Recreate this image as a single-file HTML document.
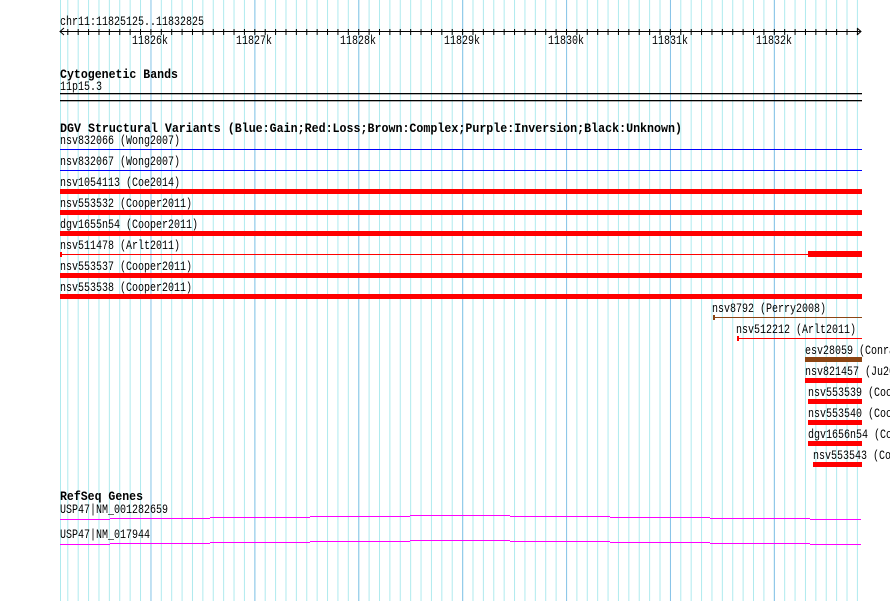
<!DOCTYPE html>
<html><head><meta charset="utf-8"><style>
html,body{margin:0;padding:0;background:#fff;}
svg{display:block;}
text{font-family:"Liberation Mono","DejaVu Sans Mono",monospace;font-size:12.5px;fill:#000;}
.b{font-weight:bold;font-size:13px;}
</style></head><body>
<svg width="890" height="601" viewBox="0 0 890 601" xmlns="http://www.w3.org/2000/svg">
<defs>
<pattern id="g" x="67.3" y="0" width="10.3896" height="601" patternUnits="userSpaceOnUse">
<rect x="0" y="0" width="1" height="601" fill="#aeeaee"/>
</pattern>
<pattern id="t" x="67.3" y="0" width="10.3896" height="601" patternUnits="userSpaceOnUse">
<rect x="0" y="29" width="1" height="6" fill="#000"/>
</pattern>
</defs>
<rect width="890" height="601" fill="#fff"/>
<rect x="60" y="0" width="802" height="601" fill="url(#g)"/>
<rect x="60" y="0" width="1" height="601" fill="#aeeaee"/>
<g fill="#8ac4e8">
<rect x="150.5" y="0" width="1" height="601"/>
<rect x="254.4" y="0" width="1" height="601"/>
<rect x="358.3" y="0" width="1" height="601"/>
<rect x="462.2" y="0" width="1" height="601"/>
<rect x="566.1" y="0" width="1" height="601"/>
<rect x="670" y="0" width="1" height="601"/>
<rect x="773.9" y="0" width="1" height="601"/>
</g>

<text x="60" y="25" textLength="144" lengthAdjust="spacingAndGlyphs">chr11:11825125..11832825</text>
<rect x="60" y="0" width="800" height="601" fill="url(#t)"/>
<rect x="60" y="31" width="801" height="1" fill="#000"/>
<path d="M64 28 L60 31.5 L64 35 M857 28 L861 31.5 L857 35" stroke="#000" fill="none" stroke-width="1"/>
<g>
<text x="132" y="44" textLength="36" lengthAdjust="spacingAndGlyphs">11826k</text>
<text x="236" y="44" textLength="36" lengthAdjust="spacingAndGlyphs">11827k</text>
<text x="340" y="44" textLength="36" lengthAdjust="spacingAndGlyphs">11828k</text>
<text x="444" y="44" textLength="36" lengthAdjust="spacingAndGlyphs">11829k</text>
<text x="548" y="44" textLength="36" lengthAdjust="spacingAndGlyphs">11830k</text>
<text x="652" y="44" textLength="36" lengthAdjust="spacingAndGlyphs">11831k</text>
<text x="756" y="44" textLength="36" lengthAdjust="spacingAndGlyphs">11832k</text>
</g>

<text class="b" x="60" y="78" textLength="118" lengthAdjust="spacingAndGlyphs">Cytogenetic Bands</text>
<text x="60" y="90" textLength="42" lengthAdjust="spacingAndGlyphs">11p15.3</text>
<rect x="60" y="93" width="802" height="1.3" fill="#000"/>
<rect x="60" y="100" width="802" height="1.3" fill="#000"/>

<text class="b" x="60" y="132" textLength="622" lengthAdjust="spacingAndGlyphs">DGV Structural Variants (Blue:Gain;Red:Loss;Brown:Complex;Purple:Inversion;Black:Unknown)</text>

<text x="60" y="144" textLength="120" lengthAdjust="spacingAndGlyphs">nsv832066 (Wong2007)</text>
<rect x="60" y="149" width="802" height="1" fill="#0000ff"/>
<text x="60" y="165" textLength="120" lengthAdjust="spacingAndGlyphs">nsv832067 (Wong2007)</text>
<rect x="60" y="170" width="802" height="1" fill="#0000ff"/>
<text x="60" y="186" textLength="120" lengthAdjust="spacingAndGlyphs">nsv1054113 (Coe2014)</text>
<rect x="60" y="189" width="802" height="5" fill="#ff0000"/>
<text x="60" y="207" textLength="132" lengthAdjust="spacingAndGlyphs">nsv553532 (Cooper2011)</text>
<rect x="60" y="210" width="802" height="5" fill="#ff0000"/>
<text x="60" y="228" textLength="138" lengthAdjust="spacingAndGlyphs">dgv1655n54 (Cooper2011)</text>
<rect x="60" y="231" width="802" height="5" fill="#ff0000"/>
<text x="60" y="249" textLength="120" lengthAdjust="spacingAndGlyphs">nsv511478 (Arlt2011)</text>
<rect x="60" y="254" width="802" height="1" fill="#ff0000"/>
<rect x="60" y="252" width="2" height="5" fill="#ff0000"/>
<rect x="808" y="251" width="54" height="6" fill="#ff0000"/>
<text x="60" y="270" textLength="132" lengthAdjust="spacingAndGlyphs">nsv553537 (Cooper2011)</text>
<rect x="60" y="273" width="802" height="5" fill="#ff0000"/>
<text x="60" y="291" textLength="132" lengthAdjust="spacingAndGlyphs">nsv553538 (Cooper2011)</text>
<rect x="60" y="294" width="802" height="5" fill="#ff0000"/>

<text x="712" y="312" textLength="114" lengthAdjust="spacingAndGlyphs">nsv8792 (Perry2008)</text>
<rect x="713" y="317" width="149" height="1" fill="#8b4513"/>
<rect x="713" y="315" width="2" height="5" fill="#8b4513"/>
<text x="736" y="333" textLength="120" lengthAdjust="spacingAndGlyphs">nsv512212 (Arlt2011)</text>
<rect x="737" y="338" width="125" height="1" fill="#ff0000"/>
<rect x="737" y="336" width="2" height="5" fill="#ff0000"/>
<text x="805" y="354" textLength="126" lengthAdjust="spacingAndGlyphs">esv28059 (Conrad2010)</text>
<rect x="805" y="357" width="57" height="5" fill="#8b4513"/>
<text x="805" y="375" textLength="108" lengthAdjust="spacingAndGlyphs">nsv821457 (Ju2010)</text>
<rect x="805" y="378" width="57" height="5" fill="#ff0000"/>
<text x="808" y="396" textLength="132" lengthAdjust="spacingAndGlyphs">nsv553539 (Cooper2011)</text>
<rect x="808" y="399" width="54" height="5" fill="#ff0000"/>
<text x="808" y="417" textLength="132" lengthAdjust="spacingAndGlyphs">nsv553540 (Cooper2011)</text>
<rect x="808" y="420" width="54" height="5" fill="#ff0000"/>
<text x="808" y="438" textLength="138" lengthAdjust="spacingAndGlyphs">dgv1656n54 (Cooper2011)</text>
<rect x="808" y="441" width="54" height="5" fill="#ff0000"/>
<text x="813" y="459" textLength="132" lengthAdjust="spacingAndGlyphs">nsv553543 (Cooper2011)</text>
<rect x="813" y="462" width="49" height="5" fill="#ff0000"/>

<text class="b" x="60" y="500" textLength="83" lengthAdjust="spacingAndGlyphs">RefSeq Genes</text>
<text x="60" y="513" textLength="108" lengthAdjust="spacingAndGlyphs">USP47|NM_001282659</text>
<g fill="#ff00ff">
<rect x="60" y="519" width="50" height="1"/><rect x="110" y="518" width="100" height="1"/><rect x="210" y="517" width="100" height="1"/><rect x="310" y="516" width="100" height="1"/><rect x="410" y="515" width="100" height="1"/><rect x="510" y="516" width="100" height="1"/><rect x="610" y="517" width="100" height="1"/><rect x="710" y="518" width="100" height="1"/><rect x="810" y="519" width="51" height="1"/>
</g>
<text x="60" y="538" textLength="90" lengthAdjust="spacingAndGlyphs">USP47|NM_017944</text>
<g fill="#ff00ff">
<rect x="60" y="544" width="50" height="1"/><rect x="110" y="543" width="100" height="1"/><rect x="210" y="542" width="100" height="1"/><rect x="310" y="541" width="100" height="1"/><rect x="410" y="540" width="100" height="1"/><rect x="510" y="541" width="100" height="1"/><rect x="610" y="542" width="100" height="1"/><rect x="710" y="543" width="100" height="1"/><rect x="810" y="544" width="51" height="1"/>
</g>
</svg>
</body></html>
